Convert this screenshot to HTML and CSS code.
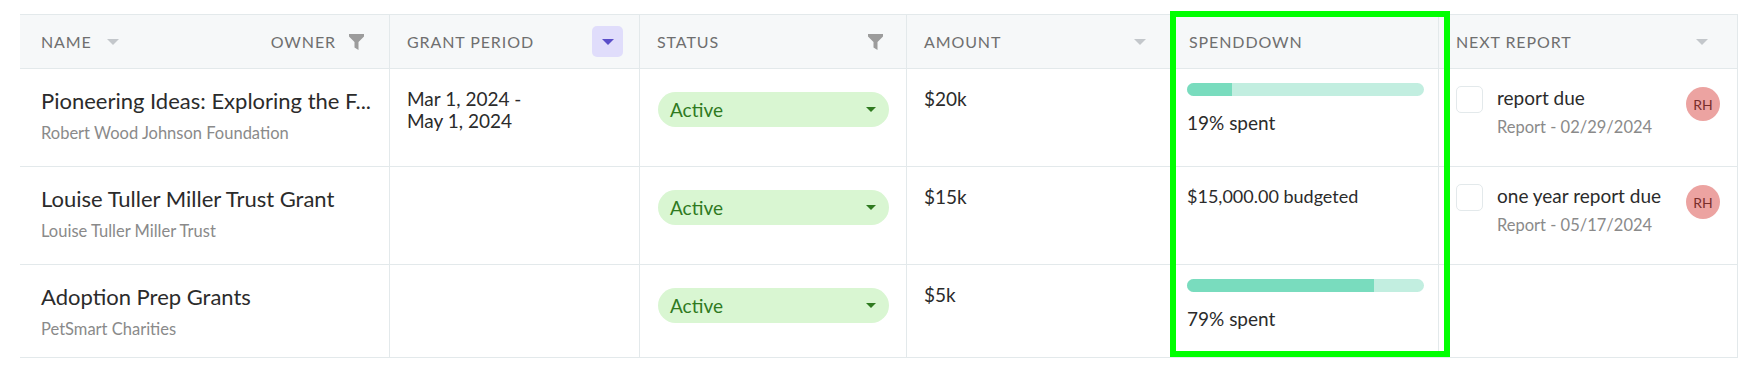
FILE: index.html
```html
<!DOCTYPE html>
<html lang="en">
<head>
  <meta charset="UTF-8">
  <title>Grants</title>
  <link rel="stylesheet" href="styles.css">
</head>
<body>

<div class="grants">
  <div class="row head">
    <div class="cell name-head">
      <span class="label">Name</span>
      <span class="icon"><svg width="12" height="6" viewBox="0 0 12 6"><path d="M0 0h12L6 6z" fill="#c3c7cb"/></svg></span>
      <span class="spacer"></span>
      <span class="label">Owner</span>
      <span class="icon"><svg width="15" height="16" viewBox="0 0 15 16"><path d="M0 0h15v2.5L9.5 8v8l-4-2.5V8L0 2.5z" fill="#9c9c9c"/></svg></span>
    </div>
    <div class="cell">
      <span class="label">Grant Period</span>
      <span class="icon active"><svg width="12" height="6" viewBox="0 0 12 6"><path d="M0 0h12L6 6z" fill="#5a4ec9"/></svg></span>
    </div>
    <div class="cell">
      <span class="label">Status</span>
      <span class="icon"><svg width="15" height="16" viewBox="0 0 15 16"><path d="M0 0h15v2.5L9.5 8v8l-4-2.5V8L0 2.5z" fill="#9c9c9c"/></svg></span>
    </div>
    <div class="cell">
      <span class="label">Amount</span>
      <span class="icon"><svg width="12" height="6" viewBox="0 0 12 6"><path d="M0 0h12L6 6z" fill="#c3c7cb"/></svg></span>
    </div>
    <div class="cell">
      <span class="label">Spenddown</span>
    </div>
    <div class="cell next-head">
      <span class="label">Next Report</span>
      <span class="icon"><svg width="12" height="6" viewBox="0 0 12 6"><path d="M0 0h12L6 6z" fill="#c3c7cb"/></svg></span>
    </div>
  </div>

  <div class="row body">
    <div class="cell stack">
      <div class="title">Pioneering Ideas: Exploring the F...</div>
      <div class="sub">Robert Wood Johnson Foundation</div>
    </div>
    <div class="cell period">Mar 1, 2024 -<br>May 1, 2024</div>
    <div class="cell"><div class="pill">Active <svg width="10" height="5" viewBox="0 0 10 5"><path d="M0 0h10L5 5z" fill="#2f7a1f"/></svg></div></div>
    <div class="cell amount">$20k</div>
    <div class="cell stack spend">
      <div class="bar"><div class="fill" style="width: 19%"></div></div>
      <div class="spent">19% spent</div>
    </div>
    <div class="cell report">
      <span class="check"></span>
      <div class="stack grow">
        <div class="report-title">report due</div>
        <div class="report-sub">Report - 02/29/2024</div>
      </div>
      <span class="avatar">RH</span>
    </div>
  </div>

  <div class="row body">
    <div class="cell stack">
      <div class="title">Louise Tuller Miller Trust Grant</div>
      <div class="sub">Louise Tuller Miller Trust</div>
    </div>
    <div class="cell period"></div>
    <div class="cell"><div class="pill">Active <svg width="10" height="5" viewBox="0 0 10 5"><path d="M0 0h10L5 5z" fill="#2f7a1f"/></svg></div></div>
    <div class="cell amount">$15k</div>
    <div class="cell spend budget">$15,000.00 budgeted</div>
    <div class="cell report">
      <span class="check"></span>
      <div class="stack grow">
        <div class="report-title">one year report due</div>
        <div class="report-sub">Report - 05/17/2024</div>
      </div>
      <span class="avatar">RH</span>
    </div>
  </div>

  <div class="row body last">
    <div class="cell stack">
      <div class="title">Adoption Prep Grants</div>
      <div class="sub">PetSmart Charities</div>
    </div>
    <div class="cell period"></div>
    <div class="cell"><div class="pill">Active <svg width="10" height="5" viewBox="0 0 10 5"><path d="M0 0h10L5 5z" fill="#2f7a1f"/></svg></div></div>
    <div class="cell amount">$5k</div>
    <div class="cell stack spend">
      <div class="bar"><div class="fill" style="width: 79%"></div></div>
      <div class="spent">79% spent</div>
    </div>
    <div class="cell report"></div>
  </div>

  <div class="highlight"></div>
</div>

</body>
</html>
```

FILE: styles.css
```css
body {
  margin: 0;
  padding: 14px 0 0 20px;
  background-color: #fff;
  font-family: Lato, "Open Sans", sans-serif;
  color: #2b2b2b;
}
.grants {
  position: relative;
  width: 1718px;
}
.row {
  display: grid;
  grid-template-columns: 370px 250px 267px 265px 267px 299px;
  border-bottom: 1px solid #e3e9eb;
}
.cell {
  border-right: 1px solid #e3e9eb;
  padding: 0 16px 0 17px;
}
.head {
  height: 53px;
  background-color: #f6f8f9;
  border-top: 1px solid #e3e9eb;
}
.head .cell {
  display: flex;
  align-items: center;
  justify-content: space-between;
}
.head .name-head {
  justify-content: flex-start;
  padding-left: 21px;
  padding-right: 18px;
}
.head .next-head {
  padding-right: 20px;
}
.spacer {
  flex: 1;
}
.label {
  font-size: 16px;
  letter-spacing: 0.9px;
  text-transform: uppercase;
  color: #6f6f6f;
}
.icon {
  width: 30px;
  height: 30px;
  display: flex;
  align-items: center;
  justify-content: center;
  border-radius: 5px;
}
.name-head .icon:nth-child(2) {
  margin-left: 6px;
}
.name-head .icon:last-child {
  margin-left: 5px;
}
.icon.active {
  background-color: #e0ddfb;
  height: 31px;
  width: 31px;
}
.body {
  height: 97px;
}
.body.last {
  height: 92px;
}
.body .cell {
  padding-top: 18px;
}
.stack {
  display: flex;
  flex-direction: column;
}
.body .cell.stack:first-child {
  padding-left: 21px;
}
.title {
  font-size: 22px;
  line-height: 28px;
  color: #2b2b2b;
  white-space: nowrap;
}
.sub {
  font-size: 16.5px;
  line-height: 20px;
  color: #8a8a8a;
  margin-top: 8px;
}
.period {
  font-size: 19px;
  line-height: 22px;
  padding-top: 19px !important;
}
.pill {
  display: flex;
  align-items: center;
  justify-content: space-between;
  height: 35px;
  margin: 5px 1px 0 1px;
  padding: 0 13px 0 12px;
  border-radius: 18px;
  background-color: #d9f6d2;
  color: #2f7a1f;
  font-size: 19px;
}
.amount {
  font-size: 19px;
  line-height: 22px;
  padding-top: 19px !important;
}
.spend {
  padding-left: 15px;
  padding-right: 14px;
}
.bar {
  height: 13px;
  margin-top: -4px;
  border-radius: 7px;
  background-color: #c2eee0;
  overflow: hidden;
}
.fill {
  height: 100%;
  background-color: #79dcbe;
}
.spent {
  font-size: 19px;
  line-height: 22px;
  margin-top: 16px;
}
.budget {
  font-size: 18px;
  line-height: 22px;
}
.report {
  display: flex;
  align-items: flex-start;
  padding-top: 17px !important;
}
.check {
  width: 25px;
  height: 25px;
  border: 1px solid #e3e9eb;
  border-radius: 5px;
  flex-shrink: 0;
}
.grow {
  flex: 1;
  padding-left: 14px;
}
.report-title {
  font-size: 19px;
  line-height: 24px;
}
.report-sub {
  font-size: 16.5px;
  line-height: 20px;
  color: #8a8a8a;
  margin-top: 7px;
}
.avatar {
  width: 34px;
  height: 34px;
  margin-top: 1px;
  margin-right: 1px;
  border-radius: 50%;
  background-color: #eca3a1;
  color: #7a2f2c;
  font-size: 14px;
  display: flex;
  align-items: center;
  justify-content: center;
}
.highlight {
  position: absolute;
  left: 1150px;
  top: -3px;
  width: 268px;
  height: 334px;
  border: 6px solid #00ff00;
}
```
